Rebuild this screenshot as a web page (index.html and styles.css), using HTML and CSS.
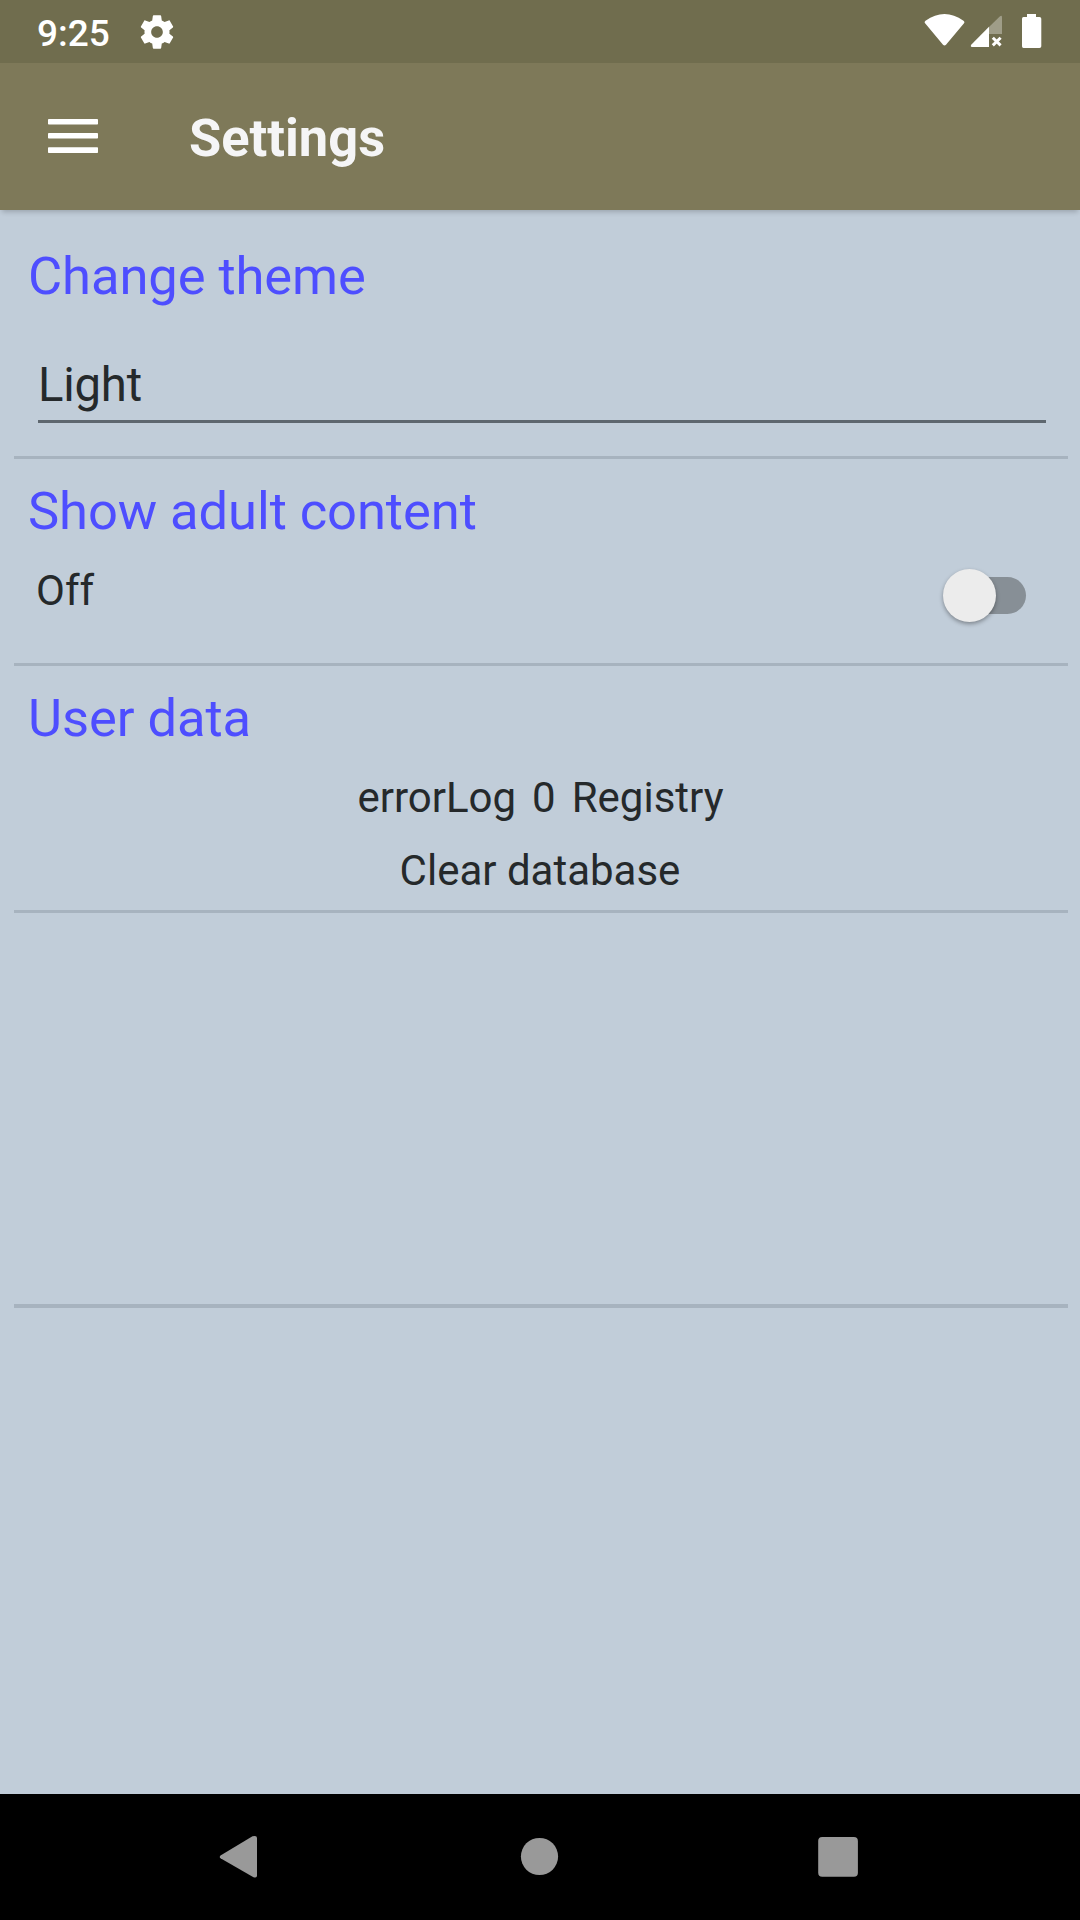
FILE: index.html
```html
<!DOCTYPE html>
<html lang="en">
<head>
<meta charset="utf-8">
<title>Settings</title>
<link rel="stylesheet" href="styles.css">
</head>
<body>
<div class="screen">
  <div class="status-bar">
    <span class="clock">9:25</span>
    <svg class="gear" viewBox="0 0 24 24"><path d="M19.430 12.980c.04-.32.07-.64.07-.98s-.03-.66-.07-.98l2.110-1.650c.19-.15.24-.42.12-.64l-2-3.460c-.12-.22-.39-.3-.61-.22l-2.490 1c-.52-.4-1.080-.73-1.690-.98l-.38-2.650C14.460 2.180 14.250 2 14 2h-4c-.25 0-.46.18-.49.42l-.38 2.650c-.61.25-1.170.59-1.690.98l-2.490-1c-.23-.09-.49 0-.61.22l-2 3.460c-.13.22-.07.49.12.64l2.110 1.650c-.04.32-.07.65-.07.98s.03.66.07.98l-2.110 1.650c-.19.15-.24.42-.12.64l2 3.460c.12.22.39.3.61.22l2.490-1c.52.4 1.080.73 1.690.98l.38 2.650c.03.24.24.42.49.42h4c.25 0 .46-.18.49-.42l.38-2.650c.61-.25 1.170-.59 1.690-.98l2.490 1c.23.09.49 0 .61-.22l2-3.460c.12-.22.07-.49-.12-.64l-2.110-1.650zM12 15.500c-1.930 0-3.500-1.570-3.500-3.500s1.570-3.500 3.500-3.500 3.500 1.570 3.500 3.500-1.570 3.500-3.500 3.500z"/></svg>
    <svg class="indicators" viewBox="0 0 120 36">
      <path d="M1.300 9.500Q-.1 8 1.500 6.800C8 2.300 14 0 20.500 0S33 2.300 39.500 6.800Q41.100 8 39.800 9.500L22 30.800Q20.500 32.300 19 30.800Z"/>
      <path class="dim" d="M65 13 76 2.300Q78 1 78 3.200V20H65Z"/>
      <path d="M65 12.800V33H48Q46 32.800 47.200 30.800Z"/>
      <path class="cross" d="M68.800 23.800 76.600 31.400M76.600 23.800 68.800 31.400"/>
      <path d="M103 0h9v3h3.500q1.800 0 1.800 1.800V32.200q0 1.800-1.800 1.800h-16q-1.500 0-1.500-1.800V4.800Q98 3 99.500 3h3.500z"/>
    </svg>
  </div>
  <header class="app-bar">
    <svg class="menu" viewBox="0 0 50 34"><rect width="50" height="5.500" rx=".8"/><rect y="14" width="50" height="5.500" rx=".8"/><rect y="28.200" width="50" height="5.800" rx=".8"/></svg>
    <h1 class="title">Settings</h1>
  </header>
  <main class="content">
    <section class="section theme">
      <h2 class="heading">Change theme</h2>
      <div class="picker">Light</div>
    </section>
    <section class="section adult">
      <h2 class="heading">Show adult content</h2>
      <div class="toggle-row">
        <span class="toggle-label">Off</span>
        <span class="switch"><span class="thumb"></span></span>
      </div>
    </section>
    <section class="section data">
      <h2 class="heading">User data</h2>
      <div class="log-row"><span>errorLog</span><span>0</span><span>Registry</span></div>
      <div class="clear">Clear database</div>
    </section>
    <section class="section empty"></section>
  </main>
  <nav class="nav-bar">
    <svg class="nav-icon" viewBox="0 0 44 44"><path d="M2.500 20.500 34.500 1.300Q39 0 39 3V40.500Q39 43.500 35.500 42.200L2.500 23.300Q1 22 2.500 20.500Z"/></svg>
    <svg class="nav-icon" viewBox="0 0 44 44"><circle cx="22.500" cy="21.500" r="18.600"/></svg>
    <svg class="nav-icon" viewBox="0 0 44 44"><rect x="2.200" y="2" width="39.700" height="39.700" rx="4"/></svg>
  </nav>
</div>
</body>
</html>
```
FILE: styles.css
```css
* { box-sizing: border-box; }
body { margin: 0; font-family: Roboto, sans-serif; }
h1, h2 { margin: 0; }
svg { display: block; fill: #fff; }

.screen {
  display: flex;
  flex-direction: column;
  width: 1080px;
  height: 1920px;
  background: #c1cdd9;
  color: #25292b;
}

.status-bar {
  display: flex;
  height: 63px;
  padding: 12px 36px 0 37px;
  background: #706d4e;
}
.clock {
  width: 100px;
  font-size: 37px;
  font-weight: 500;
  line-height: 44px;
  color: #fff;
}
.gear { width: 40px; height: 40px; }
.indicators {
  width: 120px;
  height: 36px;
  margin: 2px 0 0 auto;
}
.dim { fill: #9f9d88; }
.cross { stroke: #fff; stroke-width: 3; }

.app-bar {
  display: flex;
  align-items: flex-start;
  gap: 91px;
  height: 147px;
  padding: 44px 48px 0;
  background: #7e7959;
  box-shadow: 0 4px 5px -2px rgba(0, 0, 0, .2);
}
.menu { width: 50px; height: 34px; margin-top: 12px; }
.title {
  font-size: 52.400px;
  font-weight: 700;
  line-height: 62px;
  color: #f5f5f6;
}

.content { flex: 1; padding: 0 12px 0 14px; }
.section {
  padding: 21px 14px 0;
  border-bottom: 3px solid #a7b3bf;
}
.heading {
  font-size: 52.500px;
  font-weight: 400;
  line-height: 62px;
  letter-spacing: -.08px;
  color: #4e4eff;
}
.theme { height: 249px; padding-top: 35px; }
.picker {
  height: 66px;
  margin: 50px 8px 0 10px;
  border-bottom: 3px solid #5e676f;
  font-size: 47.250px;
  line-height: 56px;
  letter-spacing: -.2px;
}

.adult { height: 207px; }
.toggle-row {
  display: flex;
  justify-content: space-between;
  align-items: flex-start;
  padding: 24px 28px 0 8px;
}
.toggle-label { font-size: 42px; line-height: 50px; }
.switch {
  display: flex;
  align-items: center;
  width: 74px;
  height: 37px;
  margin-top: 11px;
  border-radius: 19px;
  background: #878f96;
}
.thumb {
  width: 53px;
  height: 53px;
  flex: none;
  margin-left: -9px;
  border-radius: 50%;
  background: #ececec;
  box-shadow: 0 2px 4px rgba(0, 0, 0, .35);
}

.data { height: 247px; font-size: 42px; line-height: 50px; }
.log-row {
  display: flex;
  justify-content: center;
  gap: 16px;
  margin: 24px 1px 0 0;
}
.clear { margin: 23px 2px 0 0; text-align: center; }
.empty { height: 395px; border-bottom-width: 4px; }

.nav-bar {
  display: flex;
  justify-content: space-between;
  height: 126px;
  padding: 41px 220px 0 218px;
  background: #000;
}
.nav-icon { width: 44px; height: 44px; fill: #999; }
```
